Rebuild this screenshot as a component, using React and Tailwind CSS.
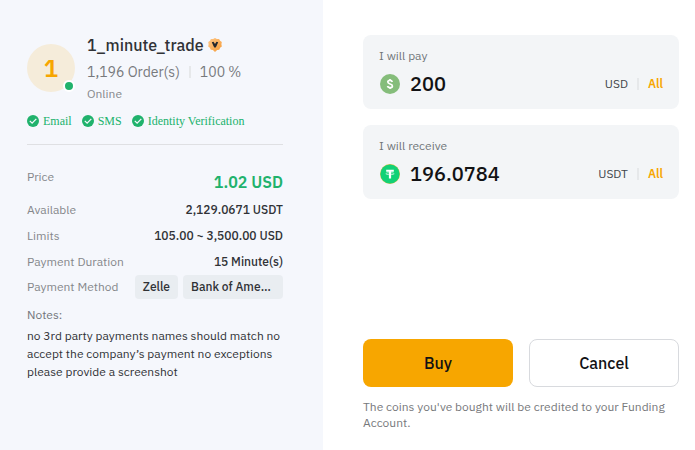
import React, { useState } from "react";

const badges = ["Email", "SMS", "Identity Verification"];

const details = [
  { label: "Available", value: "2,129.0671 USDT" },
  { label: "Limits", value: "105.00 ~ 3,500.00 USD" },
  { label: "Payment Duration", value: "15 Minute(s)" },
];

const PRICE = 1.02;

function CheckBadge() {
  return (
    <svg viewBox="0 0 12 12" className="w-3 h-3">
      <circle cx="6" cy="6" r="6" fill="#20b26c" />
      <path d="M2.8 5.9l2.3 2.2 4.2-4.2" fill="none" stroke="#f5f7fc" strokeWidth="1.3" />
    </svg>
  );
}

function MerchantBadge() {
  return (
    <svg viewBox="0 0 14 14" className="w-3.5 h-3.5">
      <defs>
        <linearGradient id="merchant" x1="0" y1="0" x2="1" y2="1">
          <stop offset="0" stopColor="#ffc98a" />
          <stop offset="1" stopColor="#f59a35" />
        </linearGradient>
      </defs>
      <path
        d="M7 0l1.9 1 2.2-.1.9 1.9 1.8 1.3-.4 2.1.4 2.2-1.7 1.4-.8 2-2.2.3L7 14l-2.1-1.9-2.2-.3-.8-2L.2 8.4l.4-2.2L.2 4.1 2 2.8 2.9.9l2.2.1z"
        fill="url(#merchant)"
      />
      <path d="M3.8 4.3l1.7-.5L7 6l1.5-2.2 1.7.5-1.9 4.2L7 9.9 5.7 8.5z" fill="#24272c" />
    </svg>
  );
}

function DollarIcon() {
  return (
    <svg viewBox="0 0 20 20" className="w-5 h-5">
      <circle cx="10" cy="10" r="10" fill="#85bd7b" />
      <path
        d="M12.3 7.9C12 6.9 11.2 6.4 10 6.4c-1.3 0-2.2.6-2.2 1.7 0 2.5 4.6 1.2 4.6 3.8 0 1.1-1 1.8-2.4 1.8-1.3 0-2.2-.6-2.5-1.7M10 5v1.5M10 13.6V15"
        fill="none"
        stroke="#fff"
        strokeWidth="1.7"
      />
    </svg>
  );
}

function TetherIcon() {
  return (
    <svg viewBox="0 0 20 20" className="w-5 h-5">
      <circle cx="10" cy="10" r="10" fill="#d9bd45" />
      <circle cx="10" cy="10" r="9.6" fill="#12d176" />
      <path d="M6.2 5.7h7.6v2h-2.7v6.7H8.9V7.7H6.2z" fill="#fff" />
      <ellipse cx="10" cy="9.7" rx="4.2" ry="1" fill="none" stroke="#fff" strokeWidth=".6" />
    </svg>
  );
}

function AmountField({ id, label, icon, value, onChange, unit, onAll }) {
  return (
    <div className="bg-[#f3f5f7] rounded-lg px-4 pt-3 pb-1.5">
      <label htmlFor={id} className="block text-xs leading-[18px] text-[#71757a]">
        {label}
      </label>
      <div className="flex items-center h-[38px] pl-px">
        {icon}
        <input
          id={id}
          type="text"
          value={value}
          onChange={(e) => onChange(e.target.value)}
          className="min-w-0 flex-1 ml-2.5 bg-transparent text-xl font-medium text-[#121214] outline-none"
        />
        <span className="text-xs text-[#42464b]">{unit}</span>
        <span className="w-0.5 h-3 mx-[9px] bg-[#e6e8ea]" />
        <button type="button" onClick={onAll} className="text-xs font-semibold text-[#f7a600] cursor-pointer">
          All
        </button>
      </div>
    </div>
  );
}

function App() {
  const [pay, setPay] = useState("200");
  const [receive, setReceive] = useState("196.0784");

  const handlePay = (value) => {
    setPay(value);
    setReceive(value ? (Number(value) / PRICE).toFixed(4) : "");
  };

  const handleReceive = (value) => {
    setReceive(value);
    setPay(value ? (Number(value) * PRICE).toFixed(2) : "");
  };

  return (
    <div className="min-h-screen flex bg-white font-['IBM_Plex_Sans','Roboto',sans-serif]">
      {/* Advertiser */}
      <section className="w-[323px] shrink-0 bg-[#f5f7fc] pl-[27px] pr-10 pt-8">
        <div className="flex items-start gap-3">
          <div className="relative w-12 h-12 mt-3 shrink-0 rounded-full bg-[#f5ecda] flex items-center justify-center text-2xl font-semibold text-[#f7a600]">
            1
            <span className="absolute right-0 bottom-0 w-3 h-3 rounded-full bg-[#20b26c] border-2 border-white" />
          </div>
          <div>
            <div className="flex items-center gap-1">
              <h1 className="text-base leading-[26px] font-medium text-[#303236]">1_minute_trade</h1>
              <MerchantBadge />
            </div>
            <div className="flex items-center text-sm leading-7 text-[#77797c]">
              <span>1,196 Order(s)</span>
              <span className="w-0.5 h-3 mx-[9px] bg-[#e6e8ea]" />
              <span>100 %</span>
            </div>
            <p className="text-xs leading-4 text-[#85878b]">Online</p>
          </div>
        </div>

        <ul className="flex gap-2.5 pt-2.5 pb-3.5 border-b border-[#dfe0e3] font-['Liberation_Serif',serif] text-xs leading-[18px] text-[#20b26c]">
          {badges.map((badge) => (
            <li key={badge} className="flex items-center gap-1 whitespace-nowrap">
              <CheckBadge />
              {badge}
            </li>
          ))}
        </ul>

        <dl className="pt-6 text-xs text-[#85878b]">
          <div className="flex justify-between mb-0.5">
            <dt className="leading-4">Price</dt>
            <dd className="text-base leading-[26px] font-semibold text-[#20b26c]">{PRICE} USD</dd>
          </div>
          {details.map((d) => (
            <div key={d.label} className="flex justify-between leading-[26px]">
              <dt>{d.label}</dt>
              <dd className="font-medium text-[#303236]">{d.value}</dd>
            </div>
          ))}
          <div className="flex items-center justify-between leading-6">
            <dt>Payment Method</dt>
            <dd className="flex gap-[5px] font-medium text-[#303236]">
              <span className="rounded bg-[#e9edf1] px-2">Zelle</span>
              <span className="w-[100px] truncate rounded bg-[#e9edf1] px-2">Bank of America</span>
            </dd>
          </div>
        </dl>

        <h2 className="mt-1.5 text-xs leading-5 text-[#71757a]">Notes:</h2>
        <p className="mt-0.5 text-xs leading-[18px] text-[#303236]">
          no 3rd party payments names should match no accept the company’s payment no exceptions please provide a
          screenshot
        </p>
      </section>

      {/* Order form */}
      <form
        className="flex-1 min-w-0 flex flex-col pl-10 pr-4 pt-[35px] pb-[19px]"
        onSubmit={(e) => e.preventDefault()}
      >
        <div className="flex flex-col gap-4">
          <AmountField
            id="pay"
            label="I will pay"
            icon={<DollarIcon />}
            value={pay}
            onChange={handlePay}
            unit="USD"
            onAll={() => handlePay("3500")}
          />
          <AmountField
            id="receive"
            label="I will receive"
            icon={<TetherIcon />}
            value={receive}
            onChange={handleReceive}
            unit="USDT"
            onAll={() => handleReceive("2129.0671")}
          />
        </div>

        <div className="mt-auto">
          <div className="grid grid-cols-2 gap-4 text-base font-medium text-[#121214]">
            <button type="submit" className="h-12 rounded-lg bg-[#f7a600] cursor-pointer">
              Buy
            </button>
            <button type="button" className="h-12 rounded-lg border border-[#d8dade] bg-white cursor-pointer">
              Cancel
            </button>
          </div>
          <p className="mt-3 text-xs leading-4 text-[#77797c]">
            The coins you've bought will be credited to your Funding Account.
          </p>
        </div>
      </form>
    </div>
  );
}

export default App;
